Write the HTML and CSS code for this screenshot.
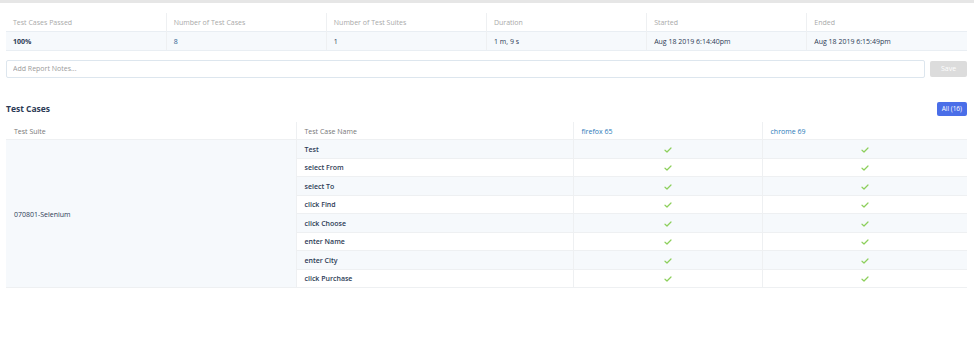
FILE: index.html
```html
<!DOCTYPE html>
<html lang="en">

<head>
  <meta charset="UTF-8">
  <meta name="viewport" content="width=device-width, initial-scale=1.0">
  <title>Test Report</title>
  <link rel="stylesheet" href="styles.css">
</head>

<body>
  <div class="topbar"></div>

  <div class="container">
    <table class="summary">
      <thead>
        <tr>
          <th>Test Cases Passed</th>
          <th>Number of Test Cases</th>
          <th>Number of Test Suites</th>
          <th>Duration</th>
          <th>Started</th>
          <th>Ended</th>
        </tr>
      </thead>
      <tbody>
        <tr>
          <td class="strong">100%</td>
          <td class="link">8</td>
          <td>1</td>
          <td>1 m, 9 s</td>
          <td>Aug 18 2019 6:14:40pm</td>
          <td>Aug 18 2019 6:15:49pm</td>
        </tr>
      </tbody>
    </table>

    <div class="notes-row">
      <input class="notes-input" type="text" placeholder="Add Report Notes...">
      <button class="save-btn">Save</button>
    </div>

    <div class="section-head">
      <h2>Test Cases</h2>
      <button class="filter-btn">All (16)</button>
    </div>

    <table class="cases">
      <thead>
        <tr>
          <th class="col-suite">Test Suite</th>
          <th class="col-name">Test Case Name</th>
          <th class="col-browser browser">firefox 65</th>
          <th class="browser">chrome 69</th>
        </tr>
      </thead>
      <tbody id="cases-body"></tbody>
    </table>
  </div>

  <script>
    const cases = ['Test', 'select From', 'select To', 'click Find', 'click Choose', 'enter Name', 'enter City', 'click Purchase'];
    const body = document.getElementById('cases-body');
    const check = '<svg class="check" width="8" height="6" viewBox="0 0 8 6" fill="none" stroke="currentColor" stroke-width="1.2" stroke-linecap="round" stroke-linejoin="round"><path d="M1 3.2 L3 5 L7 1"></path></svg>';

    cases.forEach((name, i) => {
      const tr = document.createElement('tr');
      if (i % 2 === 0) tr.className = 'alt';
      let html = '';
      if (i === 0) {
        html += `<td class="suite" rowspan="${cases.length}">070801-Selenium</td>`;
      }
      html += `<td class="name">${name}</td><td class="result">${check}</td><td class="result">${check}</td>`;
      tr.innerHTML = html;
      body.appendChild(tr);
    });
  </script>
</body>

</html>
```

FILE: styles.css
```css
* {
  margin: 0;
  padding: 0;
  box-sizing: border-box;
  font-family: 'Open Sans', sans-serif;
}

body {
  background-color: #fff;
  color: #2c3a55;
  font-size: 7px;
}

.topbar {
  height: 3px;
  background-color: #e6e6e6;
}

.container {
  padding: 10px 7px 0 6px;
}

table {
  width: 100%;
  border-collapse: collapse;
  table-layout: fixed;
}

th {
  text-align: left;
  font-weight: 400;
}

/* summary */

.summary th {
  height: 18px;
  padding: 2px 7px 0;
  color: #a9a9a9;
  border-left: 1px solid #eef0f2;
}

.summary th:first-child,
.summary td:first-child {
  border-left: none;
}

.summary td {
  height: 19px;
  padding: 1px 7px 0;
  background-color: #f6f9fc;
  border-top: 1px solid #e9eef3;
  border-bottom: 1px solid #e9eef3;
  border-left: 1px solid #eef0f2;
}

.strong {
  font-weight: 700;
}

.link {
  color: #2f5d8f;
}

/* notes */

.notes-row {
  display: flex;
  align-items: center;
  gap: 5px;
  margin-top: 9px;
}

.notes-input {
  flex: 1;
  height: 18px;
  border: 1px solid #dde6ee;
  border-radius: 2px;
  padding: 0 6px;
  font-size: 7px;
  color: #2c3a55;
  outline: none;
}

.notes-input::placeholder {
  color: #9a9a9a;
}

.save-btn {
  width: 37px;
  height: 16px;
  border: none;
  border-radius: 2px;
  background-color: #dcdcdc;
  color: #fff;
  font-size: 7px;
}

/* test cases */

.section-head {
  display: flex;
  justify-content: space-between;
  align-items: center;
  margin-top: 23px;
  height: 16px;
}

h2 {
  font-size: 8.5px;
  font-weight: 700;
  color: #2c3a55;
}

.filter-btn {
  height: 14px;
  padding: 0 5px;
  border: none;
  border-radius: 2px;
  background-color: #4a6ee8;
  color: #fff;
  font-size: 6.5px;
}

.cases {
  margin-top: 5px;
}

.col-suite {
  width: 290px;
}

.col-name {
  width: 277px;
}

.col-browser {
  width: 189px;
}

.cases th {
  height: 18px;
  padding: 2px 8px 0;
  color: #777;
  border-left: 1px solid #eef0f2;
  border-bottom: 1px solid #eef0f2;
}

.cases th:first-child {
  border-left: none;
}

.cases th.browser {
  color: #2a7ab9;
}

.cases td {
  height: 18.5px;
  padding: 1px 8px 0;
  border-left: 1px solid #eef0f2;
  border-bottom: 1px solid #eef0f2;
  font-weight: 600;
}

.cases tr.alt td {
  background-color: #f6f9fc;
}

.cases td.suite {
  background-color: #f6f9fc;
  border-left: none;
  font-weight: 400;
}

.result {
  text-align: center;
  color: #8ccf5b;
}

.check {
  display: inline-block;
  vertical-align: middle;
}
```
